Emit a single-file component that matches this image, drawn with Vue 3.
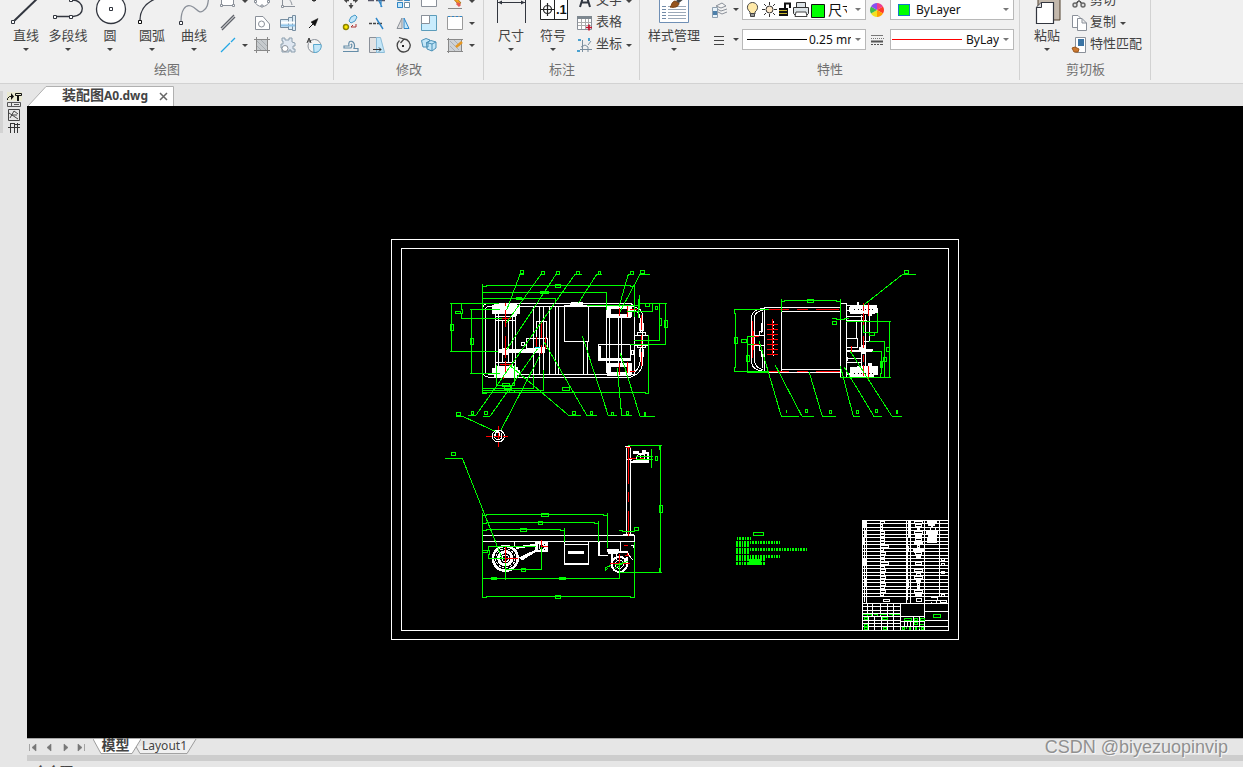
<script setup>
import { ref } from 'vue'

const ink = '#32363f'
const blue = '#2e86c8'
const pale = '#c3e6f8'
const gray = '#8a9099'

/* each shape: [path, stroke, fill, stroke width] */
const bigIcons = {
  line: [['M9 31L36 5', ink, 'none', 2], ['M6.500 30.500h3v3h-3z', ink, '#fff', 1]],
  polyline: [['M10 26.500H23M26 26.500C39 26 38 10 25 10', ink, 'none', 1.4], ['M6.500 25.500h3v3h-3zM22.500 25.500h3v3h-3zM22.500 8.500h3v3h-3z', ink, '#fff', 1]],
  circle: [['M36.500 19A14.500 14.500 0 1 1 7.500 19A14.500 14.500 0 1 1 36.500 19', ink, '#fff', 1.3], ['M20.500 17.500h3v3h-3z', ink, '#fff', 1]],
  arc: [['M9 30C9 20 15 13 24 9', ink, 'none', 1.3], ['M7.500 30.500h3v3h-3z', '#111', '#fff', 1]],
  curve: [['M8 31C8 21 12 14 18 16S25 24 30 21S35 13 36 5', gray, 'none', 1.3], ['M6.500 31.500h3v3h-3z', ink, '#fff', 1]],
  dimension: [['M7.500 2V33M35.500 2V33M8 12.500H35', ink, 'none', 1], ['M8 12.500l4-2v4zM35 12.500l-4-2v4z', 'none', ink, 0]],
  symbol: [['M8.500 2.500H35.500V29.500H8.500zM22.500 2V30', '#222', '#fff', 1], ['M19.500 19.500a4 4 0 1 1-8 0a4 4 0 1 1 8 0M9 19.500H22M15.500 13V26', '#222', 'none', 1.2]],
  style: [['M6.500 2.500H35.500V32.500H6.500z', '#6f8fb5', '#fff', 1], ['M9 16.500h4M9 19.500h4M9 22.500h4M9 25.500h4M9 28.500h4', '#718aa7', 'none', 1], ['M15 16.500H33M15 19.500H33M15 22.500H33M15 25.500H33M15 28.500H33', '#9aa8b8', 'none', 1], ['M17 17C19 16 18 12 22 11L26 13C26 17 21 18 17 17z', '#774012', '#96551f', 1], ['M23 11L30 5L32 8L26 13z', '#333', '#444', 0]],
  paste: [['M12 2H34V30H12z', '#51402f', '#c3b8ac', 1], ['M15.500 12.500H27.500V33.500H10.500V17.500z', ink, '#fff', 1.2], ['M15.500 12.500V17.500H10.500', ink, '#ddd', 1]]
}

const smallIcons = {
  rect: [['M2.500 1.500H14.500V13.500H2.500z', gray, '#fff', 1], ['M1.500 12.500h2v2h-2zM13.500 12.500h2v2h-2z', gray, '#fff', 1]],
  ellipse: [['M16 9A7 5.500 0 0 1 2 9A7 5.500 0 0 1 16 9', gray, '#fff', 1], ['M1.500 8.500h2v2h-2zM14.500 8.500h2v2h-2zM8 13h2v2H8z', gray, '#fff', 1]],
  corner: [['M3.500 1V14.500H16M4 5C9 5 12 8 13 13', gray, 'none', 1], ['M2.500 13.500h2v2h-2z', gray, '#fff', 1]],
  point: [['M9 3v7M7 8.500h4', '#333', 'none', 1]],
  parallel: [['M2 14L15 1M3 16L16 3', '#60636b', 'none', 1.4]],
  region: [['M2.500 2.500H10L16.500 10V15.500H2.500z', gray, '#fff', 1], ['M11.500 10a3 3 0 1 1-6 0a3 3 0 1 1 6 0', gray, '#fff', 1]],
  bolt: [['M1.500 5.500H9.500V13.500H1.500zM9.500 3.500H13.500V15.500H9.500zM13.500 1.500H16.500V16.500H13.500z', '#768da0', '#dcecf6', 1], ['M2 8.500H16', '#fff', 'none', 2], ['M2 11.500H16', '#8fc4ea', 'none', 2]],
  pin: [['M4 14L9 9', '#111', 'none', 1], ['M6 8L13 4.500L10 12z', '#111', '#111', 0.5]],
  construction: [['M2 16L11 7M12 6L16 2', '#23a7e5', 'none', 1.3]],
  hatch: [['M3.500 3.500H14.500V14.500H3.500z', '#777', '#c6cacd', 1], ['M1 3.500h16M1 14.500h16M3.500 1v16M14.500 1v16', '#888', 'none', 1], ['M4 10l4 4M4 5l9 9M8 4l6 6', '#9aa0a6', 'none', 0.7]],
  gear: [['M3 2h3v2h4V2h3v4l3 1v3h-2v3h2v3h-4v-2h-2v2H3v-4H2V8h2V5H3z', '#8b9ead', '#dfe7f1', 1], ['M9 12.500a3 3 0 1 1-6 0a3 3 0 1 1 6 0', gray, '#fff', 1]],
  block: [['M16 10a6.500 6.500 0 1 1-13 0a6.500 6.500 0 1 1 13 0', gray, '#f4f4f4', 1], ['M8.500 8.500H16A6.500 6.500 0 0 1 9 16.500z', '#59a9cf', pale, 1], ['M2 7L4 2L6 7M3 5h3', '#333', 'none', 1]],
  move: [['M9 3V7M9 11V15M4 8.500H7M11 8.500H14', '#444', 'none', 1.3], ['M6.500 13H11.500L9 17zM5 6V11L2 8.500zM13 6V11L16 8.500z', 'none', '#444', 0]],
  trim: [['M0 8.500H6M8 8.500H17', '#556', 'none', 1.4], ['M8 3L14 15M13 8V15', blue, 'none', 1.2]],
  array: [['M3.500 3.500h5v5h-5zM10.500 3.500h5v5h-5zM3.500 10.500h5v5h-5zM10.500 10.500h5v5h-5z', '#6c8ca2', '#fff', 1], ['M10.500 3.500h5v5h-5zM3.500 10.500h5v5h-5z', blue, pale, 1]],
  stretch: [['M1.500 1.500H16.500V14.500H1.500z', gray, '#fff', 1]],
  eraser: [['M4 3L12 12L15 11L8 3z', '#b17829', '#f6a51b', 1], ['M11 11l3 3', '#e75c54', 'none', 3], ['M2 16.500h14', '#888', 'none', 1]],
  copy: [['M7 7L9 3L13 1L15 3L13 7L9 9z', '#4599c8', pale, 1], ['M6.500 13a2.500 2.500 0 1 1-5 0a2.500 2.500 0 1 1 5 0', '#8c8200', '#ffeb00', 1.5], ['M14 10v3H9l2-2', '#a33', 'none', 1]],
  break: [['M1 9.500h3M5 9.500h3M9 9.500h5', '#444', 'none', 1.4], ['M8 4L15 15', blue, 'none', 1.4]],
  mirror: [['M8 4V14.500H3z', gray, '#ddd', 1], ['M10 4V14.500H15z', blue, pale, 1]],
  scale: [['M1.500 1.500H16.500V16.500H1.500z', '#5c9cba', '#c9ecfd', 1], ['M1.500 1.500H9.500V9.500H1.500z', gray, '#fff', 1]],
  select: [['M1.500 2.500H16.500V15.500H1.500z', '#9a9a9a', '#fff', 1], ['M2 2.500h2m2 0h2m2 0h2m2 0h2', blue, 'none', 1]],
  offset: [['M1 15.500H16V12.500H12C15 5 5 2 7 10H2v2h7C11 9 9 7 9 9', '#658da8', 'none', 1.2]],
  shear: [['M1.500 1.500H9.500V16.500H1.500z', gray, '#e3e3e3', 1], ['M8.500 1.500H12.500L16.500 16.500H8.500z', '#8bbcd8', pale, 1], ['M5 13.500h8M11 11.500l2 2l-2 2', '#333', 'none', 1]],
  rotate: [['M5.500 4.500A6.500 6.500 0 1 0 10 3M5 1.500L10 3L6.500 7', '#444', 'none', 1.3], ['M8 9h2v2H8z', 'none', '#222', 0]],
  solid: [['M1.500 4.500L6 2.500L10 4L8 6V11L3 11zM6.500 6.500L11 4.500L16 6V12L12 15L7 13z', '#4b91b7', pale, 1], ['M6.500 6.500L12 8L16 6M12 8V15', '#4b91b7', 'none', 1]],
  edit: [['M2.500 3.500H15.500V15.500H2.500z', '#888', '#cfd2d5', 1], ['M4 10l5 5M4 5l9 9M8 4l6 6', '#9ba0a7', 'none', 0.7], ['M1 3.500h16M1 15.500h16M2.500 2v15', '#888', 'none', 1], ['M10 11L16 6', '#e59721', 'none', 2.500]],
  letter: [['M4 15L8 2H10L14 15M6 10.500H12', '#303640', 'none', 2]],
  table: [['M1.500 2.500H15.500V15.500H1.500z', gray, '#fff', 1], ['M1 2H16V5H1z', 'none', '#7d878f', 0], ['M2 8.500h13M2 11.500h13M5.500 5v10M9.500 5v10M12.500 5v10', '#aaa', 'none', 1], ['M10 13.500h6M13 10.500v6', '#c0142c', 'none', 1.6]],
  coord: [['M4 13.500H16M6.500 4V16M5 11L9 9L12 11V16M12 9L15 5', '#7b8e9e', 'none', 1], ['M2 3h3v2H2zM12 2h2v3h-2zM1 14h3v2H1z', 'none', '#49a1d0', 0]],
  layers: [['M6 5L12 2L16 5L11 7zM7 8L11 10L17 8M8 11L12 13L17 11', gray, '#f4f4f4', 1], ['M2.500 6.500h5v10h-5z', '#8fa0b0', '#e8f3fa', 1], ['M3 10h4v4H3z', 'none', '#4c80ab', 0]],
  weight: [['M4 5.500H14M4 9.500H14M4 13.500H14', '#444', 'none', 1]],
  linetype: [['M3 4.500H15M3 7.500h1m1 0h1m1 0h1m1 0h1m1 0h1m1 0h1m1 0h1', '#777', 'none', 1], ['M3 10.500H15', '#555', 'none', 2], ['M3 13.500h2m1 0h2m1 0h2m1 0h3', '#555', 'none', 1]],
  cut: [['M5 3L12 12M13 3L6 12', '#444', 'none', 1.4], ['M7 13a2 2 0 1 1-4 0a2 2 0 1 1 4 0M15 13a2 2 0 1 1-4 0a2 2 0 1 1 4 0', '#666', '#ddd', 1.4]],
  pages: [['M2.500 1.500H8L11.500 5V13.500H2.500z', gray, '#fff', 1], ['M7.500 4.500H12L16.500 9V16.500H7.500zM12 4.500V9H16.500', gray, '#fff', 1]],
  match: [['M5.500 1.500H15.500V16.500H5.500z', gray, '#fff', 1], ['M8 3H14V10H8z', 'none', '#3b74a4', 0], ['M2 12L5 11L9 13L8 16H4z', '#9c581d', '#cd7930', 1]]
}

const drawTools = [
  { id: 'line', label: '直线' }, { id: 'polyline', label: '多段线' }, { id: 'circle', label: '圆' },
  { id: 'arc', label: '圆弧' }, { id: 'curve', label: '曲线' }
]
const drawSmall = [
  ['rect', true], ['ellipse'], ['corner'], ['point'],
  ['parallel'], ['region'], ['bolt'], ['pin'],
  ['construction', true], ['hatch'], ['gear'], ['block']
]
const modifySmall = [
  ['move'], ['trim'], ['array'], ['stretch'], ['eraser', true],
  ['copy'], ['break'], ['mirror'], ['scale'], ['select', true],
  ['offset'], ['shear'], ['rotate'], ['solid'], ['edit', true]
]
const noteTools = [{ id: 'dimension', label: '尺寸' }, { id: 'symbol', label: '符号' }]
const noteSmall = [{ id: 'letter', label: '文字', menu: true }, { id: 'table', label: '表格' }, { id: 'coord', label: '坐标', menu: true }]
const clipSmall = [{ id: 'cut', label: '剪切' }, { id: 'pages', label: '复制', menu: true }, { id: 'match', label: '特性匹配' }]

const layer = ref('尺寸')
const width = ref('0.25 mm')
const color = ref('ByLayer')
const lineType = ref('ByLayer')
const navIcons = [
  ['首页', 'M1.500 1V8M8 1L4 4.500L8 8z'], ['上一页', 'M7 1L3 4.500L7 8z'],
  ['下一页', 'M4 1L8 4.500L4 8z'], ['末页', 'M2 1L6 4.500L2 8zM8.500 1V8']
]

/* parts list: evenly spaced rules with a name and a material cell between them */
const rowStep = 229 / 22
const partRows = Array.from({ length: 23 }, (_, i) => 31 + i * rowStep)
const nameCells = [10, 6, 4, 10, 12, 10, 12, 24, 9, 14, 12, 10, 24, 10, 14, 12, 15, 10, 14, 12, 14, 9]
const matCells = [24, 20, 8, 24, 20, 20, 22, 8, 30, 18, 10, 0, 16, 0, 24, 14, 22, 12, 6, 6, 22, 20]
</script>

<template>
  <div class="app">
    <header class="ribbon">
      <section class="group draw">
        <div class="body">
          <button v-for="t in drawTools" :key="t.id" class="big">
            <svg class="big-icon" viewBox="0 0 42 36"><path v-for="(p, i) in bigIcons[t.id]" :key="i" :d="p[0]" :stroke="p[1]" :fill="p[2]" :stroke-width="p[3]" /></svg>
            <span>{{ t.label }}</span><i class="arrow"></i>
          </button>
          <div class="small-grid four">
            <button v-for="[id, menu] in drawSmall" :key="id" class="small" :aria-label="id">
              <svg class="icon" viewBox="0 0 18 18"><path v-for="(p, i) in smallIcons[id]" :key="i" :d="p[0]" :stroke="p[1]" :fill="p[2]" :stroke-width="p[3]" /></svg><i v-if="menu" class="arrow"></i>
            </button>
          </div>
        </div>
        <h2>绘图</h2>
      </section>

      <section class="group modify">
        <div class="body">
          <div class="small-grid five">
            <button v-for="[id, menu] in modifySmall" :key="id" class="small" :aria-label="id">
              <svg class="icon" viewBox="0 0 18 18"><path v-for="(p, i) in smallIcons[id]" :key="i" :d="p[0]" :stroke="p[1]" :fill="p[2]" :stroke-width="p[3]" /></svg><i v-if="menu" class="arrow"></i>
            </button>
          </div>
        </div>
        <h2>修改</h2>
      </section>

      <section class="group note">
        <div class="body">
          <button v-for="t in noteTools" :key="t.id" class="big">
            <svg class="big-icon" viewBox="0 0 42 36"><path v-for="(p, i) in bigIcons[t.id]" :key="i" :d="p[0]" :stroke="p[1]" :fill="p[2]" :stroke-width="p[3]" /><text v-if="t.id === 'symbol'" class="digit" x="24" y="24">.1</text></svg>
            <span>{{ t.label }}</span><i class="arrow"></i>
          </button>
          <div class="rows">
            <button v-for="t in noteSmall" :key="t.id" class="row-btn">
              <svg class="icon" viewBox="0 0 18 18"><path v-for="(p, i) in smallIcons[t.id]" :key="i" :d="p[0]" :stroke="p[1]" :fill="p[2]" :stroke-width="p[3]" /></svg><span>{{ t.label }}</span><i v-if="t.menu" class="arrow"></i>
            </button>
          </div>
        </div>
        <h2>标注</h2>
      </section>

      <section class="group props">
        <div class="body">
          <button class="big wide">
            <svg class="big-icon" viewBox="0 0 42 36"><path v-for="(p, i) in bigIcons.style" :key="i" :d="p[0]" :stroke="p[1]" :fill="p[2]" :stroke-width="p[3]" /></svg>
            <span>样式管理</span><i class="arrow"></i>
          </button>
          <div class="prop-grid">
            <button v-for="id in ['layers', 'weight']" :key="id" class="small prop-btn" :aria-label="id">
              <svg class="icon" viewBox="0 0 18 18"><path v-for="(p, i) in smallIcons[id]" :key="i" :d="p[0]" :stroke="p[1]" :fill="p[2]" :stroke-width="p[3]" /></svg><i class="arrow"></i>
            </button>
            <label class="combo layer-combo">
              <svg class="layer-icons" viewBox="0 0 82 19">
                <path d="M7 12C2 8 5 2.500 9.500 2.500S17 8 12 12V14H7z" fill="#ffe9a8" stroke="#444" /><path d="M7.500 13.500h4v3h-4z" fill="#999" stroke="#444" />
                <path d="M26.500 2v3M26.500 14v3M19 9.500h3M31 9.500h3M21 4l2 2M30 13l2 2M32 4l-2 2M21 15l2-2" stroke="#333" /><circle cx="26.500" cy="9.500" r="3.500" fill="#ffe9c9" stroke="#333" />
                <path d="M36 8h9v8h-9z" fill="#111" /><path d="M36 10.500h8M36 13.500h8" stroke="#cbb82c" /><path d="M42 8V3.500h5V8" fill="none" stroke="#111" stroke-width="2" />
                <path d="M53.500 8V2.500h9V8M50.500 7.500h15v6l-2 2h-11l-2-2z" fill="#dde4e8" stroke="#333" /><path d="M53 12h10l1 4.500H52z" fill="#fff" stroke="#444" />
                <path d="M68.500 4.500h13v13h-13z" fill="#0f0" stroke="#111" />
              </svg>
              <select v-model="layer" aria-label="图层"><option>尺寸</option></select><i class="arrow"></i>
            </label>
            <label class="combo width-combo">
              <span class="stroke black"></span>
              <select v-model="width" aria-label="线宽"><option>0.25 mm</option></select><i class="arrow"></i>
            </label>
            <svg class="wheel" viewBox="-8 -8 16 16" aria-hidden="true">
              <path d="M0 0V-7A7 7 0 0 1 6 -3.500z" fill="#f03c8c" /><path d="M0 0L6 -3.500A7 7 0 0 1 6 3.500z" fill="#ff3b28" /><path d="M0 0L6 3.500A7 7 0 0 1 0 7z" fill="#ffa000" /><path d="M0 0V7A7 7 0 0 1 -6 3.500z" fill="#f2e020" /><path d="M0 0L-6 3.500A7 7 0 0 1 -6 -3.500z" fill="#3fba4e" /><path d="M0 0L-6 -3.500A7 7 0 0 1 0 -7z" fill="#8a4ff0" />
            </svg>
            <svg class="icon type-icon" viewBox="0 0 18 18" aria-hidden="true"><path v-for="(p, i) in smallIcons.linetype" :key="i" :d="p[0]" :stroke="p[1]" :fill="p[2]" :stroke-width="p[3]" /></svg>
            <label class="combo color-combo">
              <span class="swatch"></span>
              <select v-model="color" aria-label="颜色"><option>ByLayer</option></select><i class="arrow"></i>
            </label>
            <label class="combo type-combo">
              <span class="stroke red"></span>
              <select v-model="lineType" aria-label="线型"><option>ByLayer</option></select><i class="arrow"></i>
            </label>
          </div>
        </div>
        <h2>特性</h2>
      </section>

      <section class="group clip">
        <div class="body">
          <button class="big">
            <svg class="big-icon" viewBox="0 0 42 36"><path v-for="(p, i) in bigIcons.paste" :key="i" :d="p[0]" :stroke="p[1]" :fill="p[2]" :stroke-width="p[3]" /></svg>
            <span>粘贴</span><i class="arrow"></i>
          </button>
          <div class="rows">
            <button v-for="t in clipSmall" :key="t.id" class="row-btn">
              <svg class="icon" viewBox="0 0 18 18"><path v-for="(p, i) in smallIcons[t.id]" :key="i" :d="p[0]" :stroke="p[1]" :fill="p[2]" :stroke-width="p[3]" /></svg><span>{{ t.label }}</span><i v-if="t.menu" class="arrow"></i>
            </button>
          </div>
        </div>
        <h2>剪切板</h2>
      </section>
    </header>

    <div class="workspace">
      <aside class="side">
        <svg class="side-tools" viewBox="0 0 22 44" aria-hidden="true">
          <path d="M0 0H3V42H0z" fill="#d3d3d3" /><path d="M7 1H22V10H7z" fill="#e9e9d2" />
          <path d="M7.500 9V7.500L9.500 5.500H12M15.500 2.500H21.500V4.500H15.500zM18.500 5V10M17.500 5V10" fill="none" stroke="#111" /><path d="M11 2L14 5.500L11 9z" fill="#111" />
          <path d="M7.500 11.500H20.500V15.500H7.500zM11.500 11V16M14 13.500h5" fill="none" stroke="#555" />
          <path d="M8.500 18.500H19.500V29.500H8.500zM9 22L18 28M10 27L14 20L18 23M11 24h6" fill="none" stroke="#444" />
          <path d="M8 36.500H20M10.500 32V42M14.500 32V42M10 32.500H14M17.500 32V42M14 33.500H20" fill="none" stroke="#333" />
        </svg>
      </aside>

      <main class="main">
        <nav class="doc-tabs">
          <div class="doc-tab">
            <svg class="tab-shape" viewBox="0 0 146 20" preserveAspectRatio="none"><path d="M0 20L18 0.500H145.500V20" fill="#fff" stroke="#b0b0b0" /></svg>
            <a href="#" class="doc-name">装配图<span>A0.dwg</span></a>
            <button class="close" aria-label="关闭"><svg viewBox="0 0 9 9"><path d="M1 1L8 8M8 1L1 8" stroke="#666" stroke-width="1.500" /></svg></button>
          </div>
        </nav>

        <div class="canvas">
          <svg class="drawing" viewBox="27 106 1216 632" role="img" aria-label="装配图">
            <path class="w one" d="M391.500 239.500H958.500V639.500H391.500zM401.500 248.500H948.500V630.500H401.500z" />

            <!-- plan view -->
            <svg x="440" y="260" width="240" height="190" viewBox="0 0 720 570">
              <path class="w" d="M148 130H568Q583 133 583 145M148 352H568Q583 350 583 340M148 130Q128 132 128 145V340Q133 350 148 352M136 150V333M150 139H583M150 343H583M136 150Q136 139 150 139M136 333Q136 343 150 343" />
              <path class="w" d="M166 160V325M175 160V325M187 180V310M205 180V310M217 160V325M226 160V325M280 139V343M298 139V343M310 139V343M328 139V343M346 139V343M355 139V343M373 136V244H445V136zM430 244V343M442 244V343M500 148V340M508 170V343M535 170V310M544 170V310M583 139V343" />
              <path class="wf" d="M163 130H230V136H239V161H230V169H215V163H157V136H163zM157 325H170V320H235V331H241V346H230V353H163V346H157zM175 268H310V279H175zM187 263H208V285H187zM286 261H316V279H286zM394 127H430V137H388zM500 138H572V148H500zM500 163H572V173H500zM500 310H572V320H500zM500 336H572V347H500zM502 139H514V172H502zM502 310H514V346H502zM562 139H575V172H562zM562 310H575V346H562z" />
              <path class="w" d="M166 169H226V181H166zM166 307H226V320H166zM289 184H319V235H289zM289 235H322V265H289zM259 235H289V265H259zM244 247H253V256H244z" />
              <path d="M475 253H572V301H475z" fill="#000" class="w" /><path class="wf" d="M475 258H484V296H475zM475 293H572V301H475z" />
              <path class="w" d="M583 142Q608 145 608 170V310Q603 340 580 347M577 151Q600 151 600 175V215M600 262V305Q598 325 585 334M583 226H625V256H583zM592 226V218H616V226M592 256V263H616V256M598 190V212H610V190M598 268V290H610V268M574 270H580V284H574z" />
              <path class="r" d="M196 130V139M196 151V202M196 229V295M196 304V336M190 348V358M180 176H212M180 313H212M304 184V235M304 255V281M289 232V262M316 232V268M538 145V169M562 139V172M538 310V344M562 307V340M604 166V210M604 225V262M604 277V317M569 148H590M569 334H586" />
              <path d="M286 263H301" stroke="#0ff" stroke-width="3" />
              <path class="g" d="M127 72V400H140M127 80H140V77H570V80H583M583 72V170M127 98H500V150M127 115H347V130M30 130H178M35 130V274M30 274H175M64 130V148H67V160H64V175H185M95 148V340M90 148H180M90 340H180M127 385H280V345M127 392H310V330M127 397H617V400H625V226M170 315V376H223V315M280 376V385M440 136H600M560 154H637V130M596 130H680M659 130V241H583M677 130V253H570M598 105V148M595 118V175" />
              <path class="g" d="M346 73H361V82H346zM301 95H325V101H301zM229 112H244V118H229zM31 193H40V211H31zM46 154H61V160H46zM91 235H100V253H91zM367 382H388V391H367zM187 370H208V379H187zM193 378H214V388H193zM208 390H223V397H208zM617 130V139H628V130M646 139H652V148H646zM658 175H664V196H658zM673 181H682V202H673z" />
              <path class="g" d="M237 43H252M240 43L200 150M300 43H315M303 43L198 190M345 43H360M348 43L199 270M405 43H426M405 43L107 467H84M470 43H486M470 43L415 130M565 43H581M565 43L537 140M600 43H630M600 43L540 155M129 469H150L292 267M48 469H68L172 517M183 510L299 288M422 467H387L208 315M471 467H441L312 245M530 467H505L427 228M575 467H545L532 325M645 469H600L541 280" />
              <path class="g" d="M241 31H250V40H241zM304 34H313V43H304zM349 34H358V43H349zM409 34H418V43H409zM475 34H481V43H475zM571 34H580V43H571zM601 31H613V40H601zM49 457H61V466H49zM94 454H100V463H94zM133 454H142V463H133zM398 454H407V463H398zM451 454H457V463H451zM514 457H520V466H514zM559 454H565V463H559zM613 457H616V466H613z" />
              <circle class="w" cx="175" cy="528" r="18" /><circle class="w" cx="175" cy="528" r="11" /><circle class="w" cx="172" cy="522" r="7" />
              <path class="r" d="M138 529H155M162 529H182M190 529H204M175 498V510M175 520V537M175 546V560" />
            </svg>

            <!-- side elevation -->
            <svg x="720" y="260" width="210" height="170" viewBox="0 0 630 510">
              <path class="w" d="M133 142H361M184 154H361M133 142V338H361M184 328H361M184 142V338M361 130H379V352H361zM133 145Q94 148 94 175V305Q97 333 133 334M128 151Q103 154 103 176V300Q106 324 128 329M128 155V213H118V226H104M128 325V270H118V256H104M124 188V218M124 265V292M104 226H133M104 256H133" />
              <path class="w" d="M379 170H430M379 182H440M379 235H412V262H379M379 274H395M379 295H424V283M379 308H424M409 184V235M424 166V320M436 166V320M448 160V244M379 292H382V302H379M388 262H400M430 244H450M380 136H390V152H380" />
              <path class="wf" d="M391 136H412V127H416V136H470V145H473V158H466V163H455V169H445V163H391V156H387V142H391zM391 322H412V317H443V310H455V318H474V345H463V352H391V346H382V340H391zM382 269H418V262H424V255H436V268H458V277H436V283H422V277H382z" />
              <path d="M402 148H466M402 340H466" class="dots" /><path class="w" d="M160 184V287" stroke-dasharray="4 6" />
              <path class="r" d="M148 148H208M231 148H264M288 148H358M148 334H208M231 334H264M288 334H361M97 184V295M100 213V270M103 229H117M103 253H117M157 178V285M141 193H174M141 208H174M141 223H174M141 238H174M141 253H174M141 268H174M141 283H174M430 130V153M430 160V195M430 229V265M430 285V307M430 315V348M445 130V168M445 317V358M394 258V277" />
              <path class="g" d="M184 117V157M184 124H193V121H349V124H361M361 117V179M148 148H43V160H46V322H43V334H148M103 229H82V338H148M103 253H82M337 175H349V178H373V175H387M379 184H512M508 184V352M361 352H512M430 195V217H472V160M448 244H496M493 244V352M457 274H487M484 274V340H481V352" />
              <path class="g" d="M262 118H280V127H262zM43 232H52V250H43zM64 238H79V247H64zM79 286H88V304H79zM337 184H349V193H337zM448 217H463V226H448zM499 262H508V274H499zM490 292H499V304H490zM481 304H487V322H481z" />
              <path class="g" d="M118 244L184 469H237M166 316L246 469H281M267 335L307 469H347M361 318L400 469H419M373 322L462 469H486M391 274L516 469H546M430 136L548 43H588M553 31H565V40H553zM199 451V460M256 448H262V457H256zM328 451H334V460H328zM409 451H415V460H409zM466 448H472V457H466zM529 451H532V460H529z" />
            </svg>

            <!-- front elevation -->
            <svg x="435" y="435" width="240" height="175" viewBox="0 0 720 525">
              <circle cx="211" cy="370" r="37" fill="none" stroke="#fff" stroke-width="8" /><circle cx="211" cy="370" r="20" fill="none" stroke="#fff" stroke-width="9" /><circle class="w" cx="211" cy="370" r="29" stroke-dasharray="7 5" /><circle class="w" cx="211" cy="370" r="10" />
              <circle cx="553" cy="388" r="23" fill="none" stroke="#fff" stroke-width="6" /><circle class="w" cx="553" cy="388" r="12" />
              <path class="w" d="M142 301H599V320H142zM388 320V389H461V320M388 328H461M493 320V362H520M490 322V362M556 322V350M239 320V335M574 40V300M586 40V300M574 72H590M574 35H586M598 320V355M589 330H595V340" />
              <path class="wf" d="M240 335L302 326V332L245 342zM250 368L302 344V351L262 376zM301 320H339V351H301zM398 348H447V357H398zM388 384H461V391H388zM515 342H553V351H550V358H520V351H515zM529 358H534V388H529zM564 297H596V302H564zM595 47H612V53H620V45H632V50H642V84H587V77H595zM571 33H585V37H571zM550 348H578V353H550zM568 370L580 365V385H568z" />
              <path d="M309 327H330V345H309zM594 56H637V76H594z" fill="#000" /><circle class="w" cx="320" cy="336" r="8" /><path class="w" d="M603 73Q606 56 616 60L627 58V72H633M615 55V75M545 355V375M575 350L592 374" />
              <path class="r" d="M211 337V385M192 370H248M319 315V345M317 334H338M580 37V147M580 171V201M580 228V302M573 37H587M583 70H603M616 70H628M553 357V408M524 385H584M568 332H578M577 355V364M571 360H583" />
              <path class="g" d="M30 70H82L202 372M49 52H61V61H49zM142 235V487M142 241H154V238H505V241H517V340M517 235V243M142 265H154V262H478V265H490V258M490 258V320M142 286H154V283H376V286H388V280M388 280V322M142 430H553V388M211 385V435M211 403H319V335M142 487H154V484H586V487H599V320M160 334H304M160 334V345H163V358H160V370H211M142 352H158V346H145M580 31H680M676 31V412M673 31V43H676V400H673V412M556 412H680M649 42V98M604 64H655M604 73H655M552 286H562V289H597V286H608M541 390L580 379M529 391L511 398V406L520 400M541 400L567 382" />
              <path class="g" d="M319 235H340V244H319zM310 259H322V268H310zM256 280H274V289H256zM259 400H271V409H259zM169 427H184V433H169zM373 427H391V433H373zM361 481H376V490H361zM673 211H682V232H673zM661 64H667V76H661zM598 277H610V286H598z" />
            </svg>

            <!-- notes and title block -->
            <svg x="725" y="510" width="240" height="135" viewBox="0 0 720 405">
              <path class="g" d="M85 67H115V76H85z" />
              <g class="note-lines">
                <path d="M35 86H79M34 97H165M34 107H72M34 118H247M34 128H75M34 139H165M34 149H120M34 160H120" />
                <path d="M73 150H108M73 160H108" class="dense" />
              </g>
              <path class="w" d="M412 31H670V360H412zM424 31V280M466 31V260M544 31V280M556 31V280M598 31V360M643 31V260M412 280H670" />
              <path v-for="y in partRows" :key="y" class="w" :d="`M412 ${y}H670`" />
              <g v-for="(n, i) in nameCells" :key="i">
                <path class="w" :d="`M467 ${33 + i * rowStep}h${n}v6h-${n}z`" />
                <path v-if="matCells[i]" class="w" :d="`M${580 - matCells[i] / 2} ${34 + i * rowStep}h${matCells[i]}v5h-${matCells[i]}z`" />
              </g>
              <path class="wf" d="M412 31H425V51H412zM418 62H425V80H418zM412 84H418V103H412zM412 145H424V167H412zM416 205H425V230H416zM549 31H558V80H549zM544 108H552V123H544zM546 210H552V235H546zM606 32H636V41H629V47H624V55H618V47H609zM604 60H639V72H604zM609 75H636V80H609zM605 84H636V100H605zM567 122H585V130H567z" />
              <path class="w" d="M418 52V275M548 85V270M648 144H659V150H648zM648 160H659V166H648zM648 183H659V189H648zM648 252H659V258H648zM616 53H630V60H616zM475 268H493V275H475zM574 265H590V275H574zM598 270H664V276H645V270M619 262H638V270M619 276V280M634 270V280M412 290H526M412 300H526M412 310H526M412 319H598M412 331H526M412 340H526M412 350H598M427 280V319M442 280V319M466 280V319M487 280V319M505 280V319M526 280V360M430 319V360M448 319V360M469 319V360M487 319V360M505 319V360M526 334H598M538 334V350M547 334V350M556 334V350M565 319V360M583 319V360M598 303H670M598 331H670M598 350H670" />
              <path class="g" d="M625 313H646V322H625zM415 314H427V319M430 314H439V319M448 314H458V319M466 314H486M492 314H501V319M507 314H526M418 322H428V328H418zM418 343H428V349H418zM418 352H428V358H418zM472 322H486V328H472zM475 352H485V358H475zM538 325H558V331H538zM568 325H578V331H568zM586 325H597V331H586zM568 337H578V343H568zM586 342H597M532 352H538V358H532zM545 351V357M554 351V360M557 351V360M571 351V360M574 351V360M582 351V357M589 352H596V358H589z" />
            </svg>
          </svg>
        </div>

        <nav class="sheet-tabs">
          <button v-for="[name, d] in navIcons" :key="name" class="nav-btn" :aria-label="name"><svg viewBox="0 0 10 9"><path :d="d" fill="#777" stroke="#777" stroke-width="0.6" /></svg></button>
          <a href="#" class="sheet active"><svg viewBox="0 0 48 17" preserveAspectRatio="none"><path d="M0 0L8 15.500H39L48 0" fill="#fff" stroke="#999" /></svg><span>模型</span></a>
          <a href="#" class="sheet layout"><svg viewBox="0 0 62 17" preserveAspectRatio="none"><path d="M1 8L5 15.500H52L61 0" fill="#f0f0f0" stroke="#999" /></svg><span>Layout1</span></a>
        </nav>
        <div class="splitter"></div>
        <footer class="command">命令项:</footer>
      </main>
    </div>
    <div class="watermark">CSDN @biyezuopinvip</div>
  </div>
</template>

<style>
body { margin: 0; }
</style>

<style scoped>
* { box-sizing: border-box; }
.app { position: relative; height: 100vh; overflow: hidden; display: flex; flex-direction: column; background: #e6e6e6; color: #444; font: 13px "Noto Sans", "Noto Sans CJK SC", sans-serif; }
button { border: 0; padding: 0; margin: 0; background: none; font: inherit; color: inherit; }
a { color: inherit; text-decoration: none; }
svg { display: block; }
.ribbon { height: 84px; flex: none; display: flex; overflow: hidden; background: #f0f0f0; border-bottom: 1px solid #d2d2d2; }
.group { position: relative; display: flex; flex-direction: column; justify-content: flex-end; flex: none; }
.group::after { content: ""; position: absolute; right: 0; top: 0; width: 1px; height: 80px; background: #d2d2d2; }
.body { display: flex; height: 66px; flex: none; }
.draw { width: 334px; } .draw .body { padding-left: 5px; }
.modify { width: 150px; } .modify .body { padding-left: 4px; }
.note { width: 156px; } .note .body { padding-left: 6px; }
.props { width: 380px; } .props .body { padding-left: 4px; }
.clip { width: 131px; } .clip .body { padding-left: 6px; }
h2 { margin: 0; height: 27px; line-height: 27px; flex: none; text-align: center; font-size: 13px; font-weight: 400; color: #707070; }
.big { width: 42px; display: flex; flex-direction: column; align-items: center; }
.big.wide { width: 60px; }
.big-icon { width: 42px; height: 36px; flex: none; }
.big span { height: 20px; line-height: 18px; white-space: nowrap; }
.arrow { width: 0; height: 0; flex: none; border: 3px solid transparent; border-top-color: #444; border-bottom: 0; }
.big .arrow { margin-top: 2px; }
.digit { font: bold 13px "Liberation Sans", Arial, sans-serif; fill: #111; }
.small-grid { display: grid; grid-auto-rows: 22px; align-items: center; }
.four { grid-template-columns: 34px 26px 26px 26px; }
.five { grid-template-columns: repeat(5, 26px); }
.small { display: flex; align-items: center; height: 22px; padding-left: 4px; gap: 5px; }
.icon { width: 18px; height: 18px; flex: none; }
.rows { display: grid; grid-auto-rows: 22px; margin-left: 2px; }
.row-btn { display: flex; align-items: center; height: 22px; white-space: nowrap; }
.row-btn span { line-height: 18px; padding-bottom: 4px; }
.row-btn .icon { margin-right: 2px; }
.row-btn .arrow { margin-left: 4px; }
.prop-grid { display: grid; grid-template: 21px 21px / 38px 124px 24px 124px; grid-auto-flow: column; row-gap: 9px; align-self: flex-end; padding-bottom: 6px; align-items: center; }
.prop-btn { padding-left: 6px; gap: 5px; }
.combo { height: 21px; display: flex; align-items: center; border: 1px solid #b8b8b8; background: #fff; color: #111; padding-right: 4px; overflow: hidden; }
.combo .arrow { border-top-color: #777; }
.combo select { appearance: none; flex: 1; min-width: 0; height: 19px; border: 0; padding: 0; background: none; color: inherit; font: 12px "Noto Sans", "Noto Sans CJK SC", sans-serif; text-overflow: clip; overflow: hidden; }
.layer-icons { width: 82px; height: 19px; flex: none; }
.layer-combo select { margin-left: 3px; margin-right: 8px; font-size: 14px; }
.width-combo select { margin-right: 4px; }
.type-combo select { margin-right: 4px; }
.stroke { height: 1px; flex: none; }
.black { width: 60px; margin: 0 2px 0 4px; background: #000; }
.red { width: 70px; margin: 0 4px 0 1px; background: #f00; }
.swatch { width: 12px; height: 12px; flex: none; margin: 0 6px 0 7px; background: #0f0; border: 1px solid #1678c8; }
.wheel { width: 16px; height: 16px; margin-left: 3px; }
.type-icon { margin-left: 2px; }
.workspace { flex: 1; min-height: 0; display: flex; }
.side { width: 27px; flex: none; padding-top: 7px; }
.side-tools { width: 22px; height: 44px; }
.main { flex: 1; min-width: 0; display: flex; flex-direction: column; }
.doc-tabs { height: 22px; flex: none; display: flex; align-items: flex-end; }
.doc-tab { position: relative; width: 146px; height: 20px; margin-left: 1px; display: flex; align-items: center; }
.tab-shape { position: absolute; inset: 0; width: 100%; height: 100%; }
.doc-name { position: relative; margin-left: 34px; padding-bottom: 2px; font-size: 14px; line-height: 18px; font-weight: 700; white-space: nowrap; }
.doc-name span { font-size: 12px; }
.close { position: relative; margin-left: auto; margin-right: 6px; }
.close svg { width: 9px; height: 9px; }
.canvas { flex: 1; min-height: 0; background: #000; }
.drawing { width: 100%; height: 100%; shape-rendering: crispEdges; }
.w, .g, .r { stroke-width: 3; fill: none; }
.w { stroke: #fff; } .g { stroke: #0f0; } .r { stroke: #f00; }
.w.one { stroke-width: 1; }
.wf { fill: #fff; }
.dots { stroke: #000; stroke-width: 3; stroke-dasharray: 3 8; }
.note-lines path { stroke: #0f0; stroke-width: 9; stroke-dasharray: 5 3; fill: none; }
.note-lines .dense { stroke-dasharray: none; }
.sheet-tabs { height: 17px; flex: none; display: flex; border-top: 1px solid #a6a6a6; }
.nav-btn { width: 16px; display: flex; justify-content: center; align-items: center; }
.nav-btn svg { width: 10px; height: 9px; }
.nav-btn:first-child { margin-left: -2px; }
.nav-btn:nth-child(4) { margin-right: 4px; }
.sheet { position: relative; height: 16px; display: flex; justify-content: center; line-height: 14px; }
.sheet svg { position: absolute; inset: 0; width: 100%; height: 100%; }
.sheet span { position: relative; }
.active { width: 48px; z-index: 1; padding-right: 3px; font-size: 14px; line-height: 12px; font-weight: 700; }
.layout { width: 62px; margin-left: -6px; padding-right: 3px; font-size: 12px; }
.splitter { height: 6px; flex: none; background: #cdcdcd; }
.command { height: 6px; flex: none; overflow: hidden; padding-left: 7px; line-height: 20px; }
.watermark { position: absolute; right: 15px; bottom: 9px; font: 18px/22px "Liberation Sans", Arial, sans-serif; color: #909090; text-shadow: 1px 1px 0 #f6f6f6; }
</style>
